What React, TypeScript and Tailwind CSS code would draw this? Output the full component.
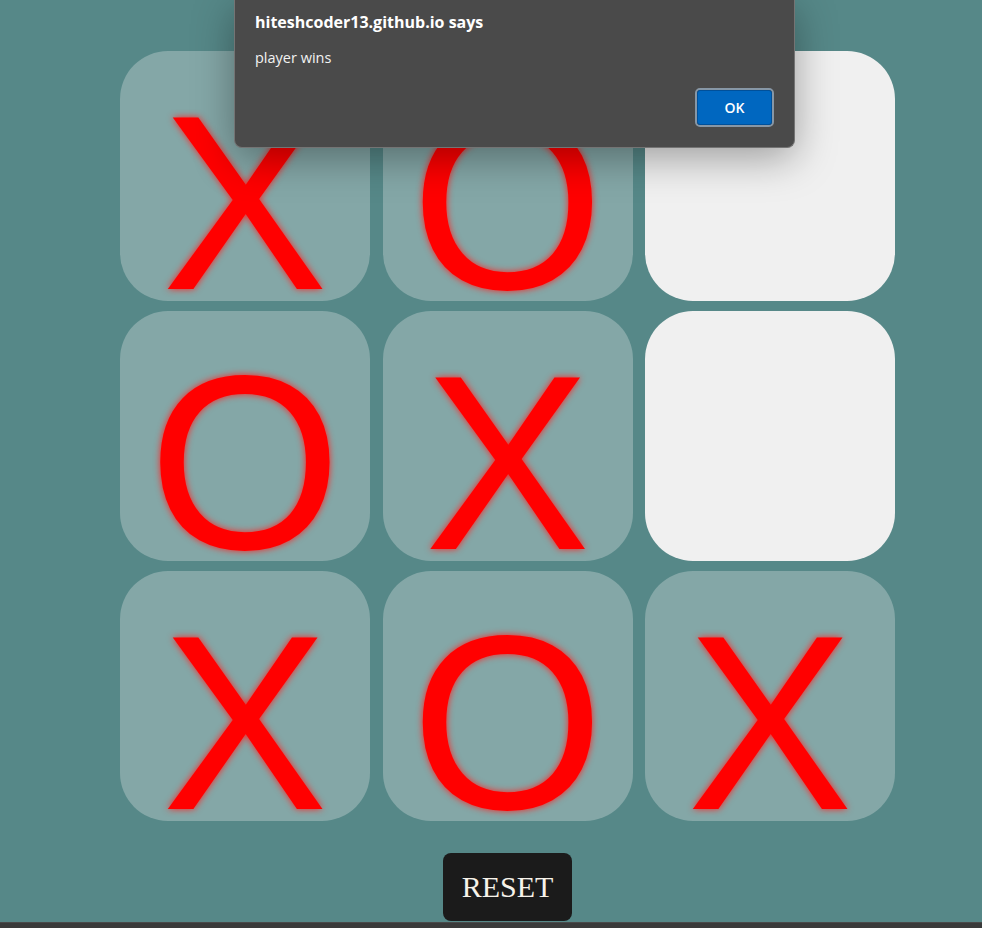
import React from "react";

const board: (string | null)[] = ["X", "O", null, "O", "X", null, "X", "O", "X"];

function Cell({ v }: { v: string | null }) {
  if (v === null) {
    return <div className="w-[250px] h-[250px] rounded-[48px] bg-[#f0f0f0]" />;
  }
  return (
    <div className="w-[250px] h-[250px] rounded-[48px] bg-[#84a7a7] flex justify-center items-start">
      <span
        className="mt-[28px] text-[248px] leading-[248px] text-[#ff0000] [text-shadow:0_0_7px_#ff2020] select-none"
        style={{ fontFamily: '"Liberation Sans", Arial, sans-serif' }}
      >
        {v}
      </span>
    </div>
  );
}

export default function App() {
  return (
    <div className="relative w-full h-[928px] overflow-hidden bg-[#568888]">
      <div className="pl-[120px] pt-[51px]">
        <div className="w-[775px] flex flex-col items-center">
          <div className="grid grid-cols-[250px_250px_250px] gap-x-[12.5px] gap-y-[10px]">
            {board.map((v, i) => (
              <Cell key={i} v={v} />
            ))}
          </div>
          <button
            className="mt-[32px] px-[19px] pt-[17px] pb-[17px] bg-[#1b1b1b] rounded-[8px] text-[30px] leading-[34px] text-[#f7f3ea]"
            style={{ fontFamily: '"Liberation Serif", "Times New Roman", serif' }}
          >
            RESET
          </button>
        </div>
      </div>

      {/* bottom bar */}
      <div className="absolute left-0 right-0 bottom-0 h-[6px] bg-[#3a3a3a] border-t border-[#4a4a4a]" />

      {/* alert dialog */}
      <div
        className="absolute left-[234px] top-0 w-[561px] h-[148px] bg-[#4a4a4a] rounded-b-[8px] border border-t-0 border-[#747474] shadow-[0_10px_40px_rgba(0,0,0,0.35)] pl-[20px] pt-[11px] text-white"
        style={{ fontFamily: '"Open Sans", "Noto Sans", sans-serif' }}
      >
        <div className="text-[16px] leading-[22px] font-bold">hiteshcoder13.github.io says</div>
        <div className="mt-[15px] text-[14.5px] leading-[19px] text-[#f2f2f2]">player wins</div>
        <div className="absolute right-[20px] bottom-[20px] w-[79px] h-[39px] rounded-[5px] border-[2px] border-[#8797a6]">
          <div className="w-full h-full rounded-[3px] bg-[#0067c0] border border-[#00509a] flex items-center justify-center text-[14px] font-semibold text-white">
            OK
          </div>
        </div>
      </div>
    </div>
  );
}
